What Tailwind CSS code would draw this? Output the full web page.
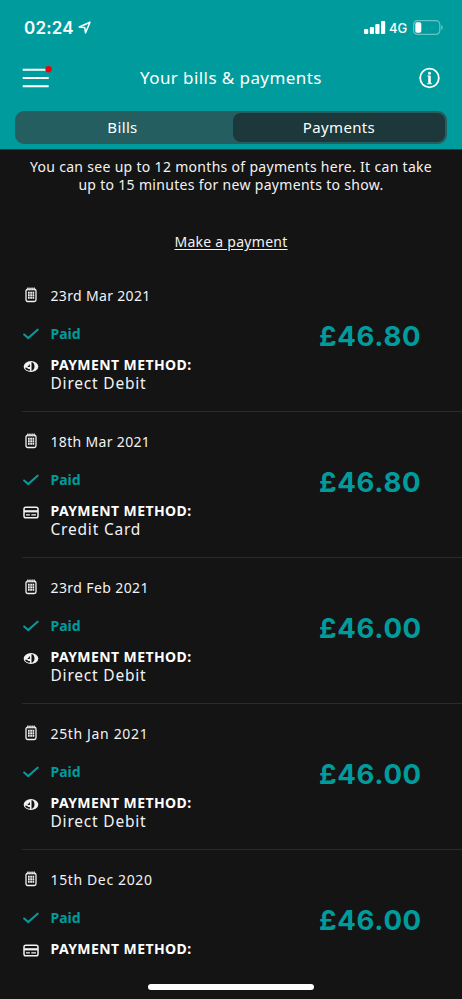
<!DOCTYPE html>
<html lang="en">
<head>
<meta charset="utf-8">
<title>Your bills &amp; payments</title>
<script src="https://cdn.jsdelivr.net/npm/@tailwindcss/browser@4"></script>
</head>
<body class="w-[462px] h-[999px] overflow-hidden bg-[#141414] text-[#f2f2f2] font-['Noto_Sans',sans-serif]">
<svg class="hidden">
  <symbol id="calendar" viewBox="0 0 12 16">
    <rect x="1" y="2.2" width="10" height="12.300" rx="1.700" fill="none" stroke="currentColor" stroke-width="1.3"/>
    <path d="M2.9 .5v3M5 .5v3M7.1 .5v3M9.200 .5v3" stroke="currentColor" stroke-width="1.2"/>
    <path d="M3 5.800h6.200M3 8.300h6.200M3 10.800h6.200" stroke="currentColor" stroke-width="1.900" stroke-dasharray="1.700 .55"/>
  </symbol>
  <symbol id="debit" viewBox="0 0 16 12">
    <ellipse cx="8" cy="6" rx="7.300" ry="5.400" fill="currentColor"/>
    <path d="M8.500 1.600c4 .6 4 8.200 0 8.800z" fill="#141414"/>
    <path d="M6.900 3.500v2.900H4.300z" fill="#141414"/>
    <path d="M2 7.200h2.200c.2 1 1.300 1.400 2.700 1.300v1.700C4.500 10.100 2.500 9 2 7.200z" fill="#141414"/>
  </symbol>
  <symbol id="card" viewBox="0 0 16 13">
    <rect x="1" y="1.300" width="14" height="10.400" rx="1.800" fill="none" stroke="currentColor" stroke-width="1.500"/>
    <path d="M1 5.300h14" stroke="currentColor" stroke-width="2.200"/>
    <path d="M3 8.900h3.900M8.300 8.900h4.700" stroke="currentColor" stroke-width="1.400"/>
  </symbol>
  <symbol id="check" viewBox="0 0 16 12">
    <path d="M1.200 6.500 5.200 10.100 14.600 1.700" fill="none" stroke="currentColor" stroke-width="2.100" stroke-linecap="round"/>
  </symbol>
</svg>

<header class="h-[150px] bg-[#009c9d] text-white flex flex-col border-b border-[#123f40]">
  <div class="h-[55px] pl-6 pr-[19px] flex items-center">
    <span class="font-['Inter',sans-serif] font-semibold text-[17px] tracking-[0.2px] leading-5 w-[54px] whitespace-nowrap">02:24</span>
    <svg class="w-[13px] h-[13px]" viewBox="0 0 13 13"><path d="M1.200 6 12 1.300 7.500 11.900 6.700 6.400z" fill="none" stroke="currentColor" stroke-width="1.500" stroke-linejoin="round"/></svg>
    <svg class="ml-auto w-[22px] h-[13px]" viewBox="0 0 22 13" fill="currentColor"><rect x="0" y="8" width="4.200" height="5" rx="1"/><rect x="5.800" y="6" width="4.200" height="7" rx="1"/><rect x="11.300" y="3" width="4.200" height="10" rx="1"/><rect x="17" y="0" width="4.200" height="13" rx="1"/></svg>
    <span class="ml-[3px] w-[24px] font-['Inter',sans-serif] font-medium text-[13px] leading-5">4G</span>
    <svg class="w-[30px] h-[15px]" viewBox="0 0 30 15"><rect x=".6" y=".6" width="26.200" height="13.800" rx="4" fill="none" stroke="#fff" stroke-opacity=".4" stroke-width="1.200"/><rect x="2.300" y="2.300" width="6" height="10.400" rx="1.800" fill="#fff"/><path d="M28.300 5v5q1.500-.6 1.500-2.500T28.300 5z" fill="#fff" fill-opacity=".4"/></svg>
  </div>
  <div class="h-[46px] pl-[22px] pr-[22px] flex items-center">
    <svg class="w-[31px] h-[24px]" viewBox="0 0 31 24"><path d="M.7 3.700h26M.7 12h26M.7 20.300h26" stroke="#fff" stroke-width="2.100"/><circle cx="26.600" cy="3.200" r="3.200" fill="#f2000d"/></svg>
    <h1 class="ml-[87px] text-[17px] tracking-[0.42px] leading-6 whitespace-nowrap">Your bills &amp; payments</h1>
    <svg class="ml-auto w-[22px] h-[22px]" viewBox="0 0 22 22" fill="none" stroke="#fff"><circle cx="11.500" cy="11" r="9.300" stroke-width="1.800"/><circle cx="11.500" cy="6.200" r="1.500" fill="#fff" stroke="none"/><path d="M9.500 9h2M9.200 16.700h4.600" stroke-width="1"/><path d="M11.500 8.700v8" stroke-width="2.600"/></svg>
  </div>
  <div class="mt-[10px] ml-[15px] w-[432px] h-[33px] rounded-[9px] bg-[#255e61] flex p-[2px] text-[15px] tracking-[0.35px]">
    <div class="w-[216px] pr-[5px] flex items-center justify-center">Bills</div>
    <div class="flex-1 rounded-[8px] bg-[#1c383a] flex items-center justify-center">Payments</div>
  </div>
</header>

<main>
  <div class="h-[116px] pt-[8px] flex flex-col items-center text-center">
    <p class="text-[14px] leading-[17.500px] tracking-[0.31px] whitespace-nowrap">You can see up to 12 months of payments here. It can take<br>up to 15 minutes for new payments to show.</p>
    <a class="mt-[39px] text-[14px] leading-5 tracking-[0.27px] underline underline-offset-2">Make a payment</a>
  </div>
  <div id="list"></div>
</main>
<div class="fixed left-[148px] top-[984px] w-[166px] h-[6px] rounded-full bg-white"></div>

<script>
const payments = [
  ['23rd Mar 2021', '£46.80', 'debit', 'Direct Debit', 'tracking-[0.33px]'],
  ['18th Mar 2021', '£46.80', 'card', 'Credit Card', 'tracking-[0.33px]'],
  ['23rd Feb 2021', '£46.00', 'debit', 'Direct Debit', 'tracking-[0.4px]'],
  ['25th Jan 2021', '£46.00', 'debit', 'Direct Debit', 'tracking-[0.65px]'],
  ['15th Dec 2020', '£46.00', 'card', '', 'tracking-[0.63px]']
];
document.getElementById('list').innerHTML = payments.map(([date, amount, icon, method, tracking]) => `
  <section class="ml-[22px] h-[146px] border-b border-[#2b2b2b] last:border-b-0 flex justify-between">
    <div class="pt-[19px]">
      <div class="flex h-5 items-center"><svg class="ml-[3px] mr-[13.500px] w-[12px] h-[16px]"><use href="#calendar"/></svg><span class="text-[14px] whitespace-nowrap ${tracking}">${date}</span></div>
      <div class="mt-[18px] flex h-5 items-center text-[#009c9d]"><svg class="mt-[2px] ml-px mr-[11.500px] w-[16px] h-[12px]"><use href="#check"/></svg><span class="text-[14px] font-bold">Paid</span></div>
      <div class="mt-[13px] flex">
        <svg class="mt-[4px] ml-px mr-[11.500px] w-[16px] h-[13px]"><use href="#${icon}"/></svg>
        <div class="whitespace-nowrap leading-[18px]"><div class="text-[14px] font-bold text-white tracking-[0.42px]">PAYMENT METHOD:</div><div class="text-[15.500px] tracking-[0.8px]">${method}</div></div>
      </div>
    </div>
    <div class="w-[143px] pt-[50px] font-['Inter',sans-serif] text-[27.500px] leading-10 font-bold tracking-[0.7px] text-[#009c9d]">${amount}</div>
  </section>`).join('');
</script>
</body>
</html>
